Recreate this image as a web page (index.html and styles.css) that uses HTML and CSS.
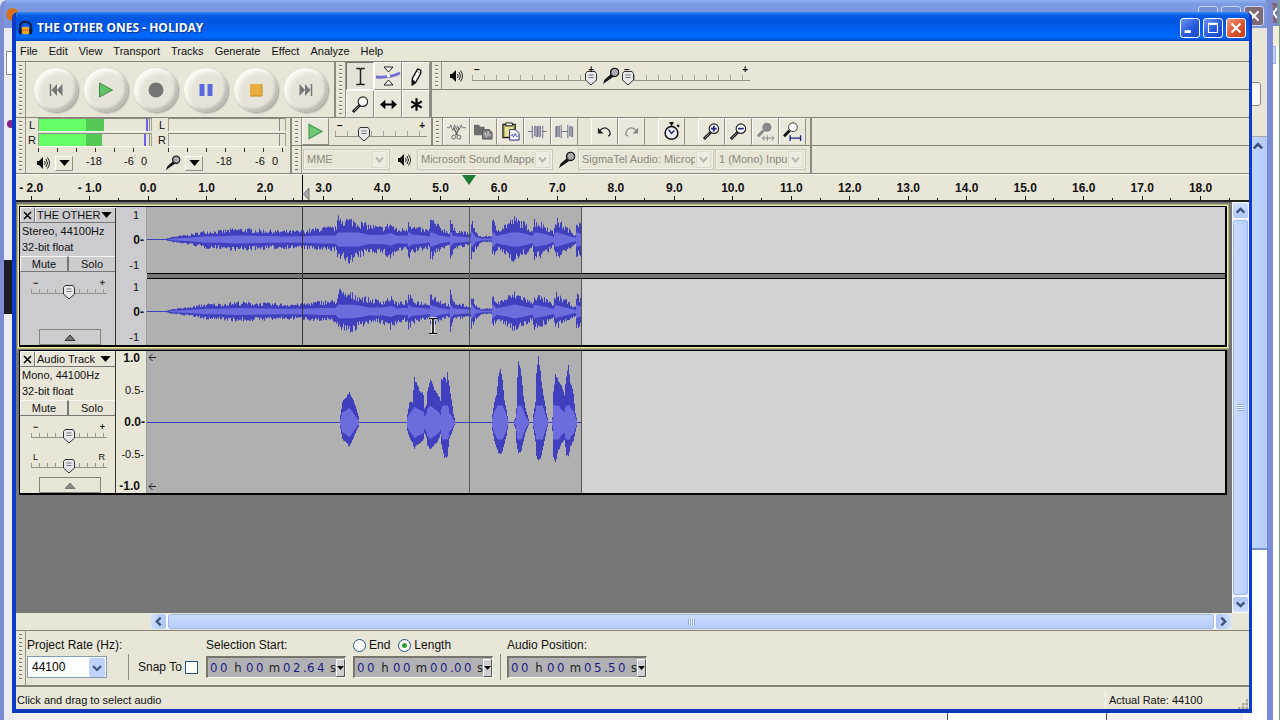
FILE: index.html
```html
<!DOCTYPE html>
<html lang="en">
<head>
<meta charset="utf-8">
<title>THE OTHER ONES - HOLIDAY</title>
<link rel="stylesheet" href="styles.css">
</head>
<body>
<svg class="defs" aria-hidden="true">
  <symbol id="speaker" viewBox="0 0 14 14"><path d="M1 5h2l4-4v12L3 9H1z" fill="#111"/><path d="M8.500 5q1.500 2 0 4M10 3q3 4 0 8M11.500 1.500q4 5.500 0 11" fill="none" stroke="#222" stroke-width="1"/></symbol>
  <symbol id="mic" viewBox="0 0 20 20"><path d="M1 19l2-5 8-7 3 3-9 6z" fill="#111"/><circle cx="14" cy="6" r="4.500" fill="#999" stroke="#111" stroke-width="1.500"/><path d="M12 3l5 5M11 5l4 4M14 2l4 4" stroke="#eee" stroke-width=".7"/></symbol>
  <symbol id="lens" viewBox="0 0 20 20"><path d="M2 18l7-7" stroke="#111" stroke-width="3"/><path d="M3 17l5-5" stroke="#bbb" stroke-width=".8"/><circle cx="12.500" cy="7" r="5" fill="#fdfdfd" stroke="#222" stroke-width="1.200"/></symbol>
  <symbol id="down" viewBox="0 0 12 7"><path d="M0 0h12L6 7z" fill="#000"/></symbol>
  <symbol id="chev" viewBox="0 0 10 10"><path d="M1.500 7L5 3.500 8.500 7" fill="none" stroke="#3d5580" stroke-width="2.200"/></symbol>
</svg>

<div class="back-far"><svg class="far-close" viewBox="0 0 8 20"><path d="M1 5l7 10M1 15L8 5" stroke="#fff" stroke-width="2"/></svg><span class="far-scroll"></span></div>
<div class="back-near">
  <span class="near-firefox"></span>
  <div class="near-buttons"><i></i><i></i><svg viewBox="0 0 20 20"><path d="M5 5l10 10M15 5L5 15" stroke="#fff" stroke-width="2.400"/></svg></div>
  <div class="near-body">
    <div class="near-left"><i class="tab"></i><i class="dot"></i><i class="dark"></i></div>
    <div class="near-right"><div class="near-tools"><i></i></div><div class="near-scroll"><svg><use href="#chev"/></svg></div></div>
  </div>
  <span class="near-box"></span>
</div>

<main class="window">
  <header class="titlebar">
    <svg class="logo" viewBox="0 0 16 16"><path d="M2 12V7q0-6 6-6t6 6v5" fill="none" stroke="#14204f" stroke-width="2.400"/><rect x="4" y="6" width="8" height="8" rx="2" fill="#f5a71b"/><path d="M4 10h8" stroke="#d83c10" stroke-width="1.500" stroke-dasharray="1 1"/><rect x="1" y="8" width="3" height="6" rx="1" fill="#151a38"/><rect x="12" y="8" width="3" height="6" rx="1" fill="#151a38"/></svg>
    <h1>THE OTHER ONES - HOLIDAY</h1>
    <button class="wb" aria-label="Minimize"><svg viewBox="0 0 20 20"><path d="M4 14h7" stroke="#fff" stroke-width="3"/></svg></button>
    <button class="wb" aria-label="Maximize"><svg viewBox="0 0 20 20"><path d="M5 6h10v9H5z" fill="none" stroke="#fff" stroke-width="1.200"/><path d="M4.500 5.500h11" stroke="#fff" stroke-width="2.400"/></svg></button>
    <button class="wb close" aria-label="Close"><svg viewBox="0 0 20 20"><path d="M5 5l10 10M15 5L5 15" stroke="#fff" stroke-width="2.200"/></svg></button>
  </header>
  <nav class="menu">
    <button>File</button><button>Edit</button><button>View</button><button>Transport</button><button>Tracks</button><button>Generate</button><button>Effect</button><button>Analyze</button><button>Help</button>
  </nav>

  <div class="dock">
    <div class="dock-row">
      <section class="bar transport"><i class="grip"></i>
        <button class="round" aria-label="Skip to start"><svg viewBox="0 0 16 16"><path d="M2.500 2v12" stroke="#777" stroke-width="1.500"/><path d="M9 2v12L3.500 8zM14.500 2v12L9 8z" fill="#777"/></svg></button>
        <button class="round" aria-label="Play"><svg viewBox="0 0 16 16"><path d="M1.500 1l13 7-13 7z" fill="#5fc267" stroke="#3b8b45"/></svg></button>
        <button class="round" aria-label="Record"><svg viewBox="0 0 16 16"><circle cx="8" cy="8" r="7.500" fill="#747474"/></svg></button>
        <button class="round" aria-label="Pause"><svg viewBox="0 0 16 16"><path d="M1.500 2h5v12h-5zM9.500 2h5v12h-5z" fill="#5a69dd"/></svg></button>
        <button class="round" aria-label="Stop"><svg viewBox="0 0 16 16"><path d="M2 2h12v12H2z" fill="#e8ad3c"/><path d="M2 14h12V2" fill="none" stroke="#c58b22"/></svg></button>
        <button class="round" aria-label="Skip to end"><svg viewBox="0 0 16 16"><path d="M13.500 2v12" stroke="#777" stroke-width="1.500"/><path d="M7 2v12l5.500-6zM1.500 2v12L7 8z" fill="#777"/></svg></button>
      </section>
      <section class="bar"><i class="grip"></i>
        <div class="tools">
          <button class="tool on" aria-label="Selection"><svg viewBox="0 0 18 18"><path d="M5 1.500h3l1 1 1-1h3M5 16.500h3l1-1 1 1h3M9 2v14" fill="none" stroke="#222" stroke-width="1.400"/></svg></button>
          <button class="tool" aria-label="Envelope"><svg class="wide" viewBox="0 0 26 22"><path d="M1 12q14 1 24-4" fill="none" stroke="#7470d0" stroke-width="3"/><path d="M9 2h9l-4.500 5zM9 20h9l-4.500-5z" fill="#fff" stroke="#222"/><circle cx="13.500" cy="11" r="1.500" fill="#fff"/></svg></button>
          <button class="tool" aria-label="Draw"><svg viewBox="0 0 18 18"><path d="M5 11l5-9 3 1 0 3-5 9-3 2z" fill="#fff" stroke="#111" stroke-width="1.300"/><path d="M5 12l3 2-3 3zM10 4l2 2" fill="#111" stroke="#111" stroke-width=".6"/></svg></button>
          <button class="tool" aria-label="Zoom"><svg viewBox="0 0 20 20"><use href="#lens"/></svg></button>
          <button class="tool" aria-label="Time shift"><svg viewBox="0 0 18 18"><path d="M3 9h12" stroke="#000" stroke-width="2"/><path d="M1 9l5-4.500v9zM17 9l-5-4.500v9z"/></svg></button>
          <button class="tool" aria-label="Multi"><svg viewBox="0 0 18 18"><path d="M9 3v12M4 6l10 6M14 6L4 12" stroke="#000" stroke-width="2"/></svg></button>
        </div>
      </section>
      <div class="stack grow">
        <section class="bar mixer"><i class="grip"></i>
          <svg class="spk"><use href="#speaker"/></svg>
          <label class="slider vol-out"><span>−</span><span>+</span><input type="range" value="100" aria-label="Output volume"></label>
          <svg class="mic"><use href="#mic"/></svg>
          <label class="slider vol-in"><span>−</span><span>+</span><input type="range" value="0" aria-label="Input volume"></label>
        </section>
      </div>
    </div>
    <div class="dock-row">
      <section class="bar meters"><i class="grip"></i>
        <div class="meter out">
          <span class="ch">L</span><div class="level"><i class="fill l"></i><i class="peak pl"></i></div>
          <span class="ch">R</span><div class="level"><i class="fill r"></i><i class="peak pr"></i></div>
          <div class="ticks"></div>
          <div class="scale"><svg class="spk"><use href="#speaker"/></svg><button class="drop" aria-label="Output meter menu"><svg><use href="#down"/></svg></button><span class="n18">-18</span><span class="n6">-6</span><span>0</span></div>
        </div>
        <div class="meter in">
          <span class="ch">L</span><div class="level"></div>
          <span class="ch">R</span><div class="level"></div>
          <div class="ticks"></div>
          <div class="scale"><svg class="mic"><use href="#mic"/></svg><button class="drop" aria-label="Input meter menu"><svg><use href="#down"/></svg></button><span class="n18">-18</span><span class="n6">-6</span><span>0</span></div>
        </div>
      </section>
      <div class="stack">
        <div class="dock-line">
          <section class="bar speed"><i class="grip"></i>
            <button class="tool" aria-label="Play at speed"><svg viewBox="0 0 16 16"><path d="M2.500 2l11 6-11 6z" fill="#6cc975" stroke="#4c9d56"/></svg></button>
            <label class="slider"><span>−</span><span>+</span><input type="range" value="29" aria-label="Playback speed"></label>
          </section>
          <section class="bar edit"><i class="grip"></i>
            <button class="tool" aria-label="Cut"><svg viewBox="0 0 20 20"><path d="M0 6h3l1-3 2 6 2-6 2 5 1-4 2 4 2-5 1 3h4" fill="none" stroke="#777" stroke-width="1"/><path d="M7 6l4 8M13 6l-4 8" stroke="#555" stroke-width="1.300"/><circle cx="7" cy="16" r="2" fill="none" stroke="#666"/><circle cx="12.500" cy="16" r="2" fill="none" stroke="#666"/></svg></button>
            <button class="tool" aria-label="Copy"><svg viewBox="0 0 20 20"><path d="M0 3h5l2 2h4v9H0z" fill="#6e6e6e"/><path d="M9 8h7l3 3v7H9z" fill="#7d7d7d" stroke="#555"/><path d="M10 14l2-3 1 5 2-6 1 5 2-2" fill="none" stroke="#ddd" stroke-width=".8"/></svg></button>
            <button class="tool" aria-label="Paste"><svg viewBox="0 0 20 20"><path d="M2 2.500h13v14H2z" fill="#a6a860" stroke="#222" stroke-width="1.300"/><path d="M4 5h9v10H4z" fill="#e7e493"/><path d="M5 1h7v3H5z" fill="#eee" stroke="#222"/><path d="M9 8h6l4 4v7H9z" fill="#fff" stroke="#23236e"/><path d="M10 15l2-2 1 3 2-4 1 3h2" fill="none" stroke="#3737b0" stroke-width=".9"/></svg></button>
            <button class="tool" aria-label="Trim"><svg viewBox="0 0 20 20"><path d="M0 10h4M16 10h4M4.500 4v13M7 15V5q1-1 1.500 0v10q1 1 1.500 0V5q1-1 1.500 0v10q1 1 1.500 0V4M15.500 4v13" fill="none" stroke="#737390" stroke-width="1.100"/></svg></button>
            <button class="tool" aria-label="Silence"><svg viewBox="0 0 20 20"><path d="M0 5v10q1 1 1.500 0V5q1-1 1.500 0v10q1 1 1.500 0V4M6.500 3v14M7 10h6M13.500 3v14M15.500 15V5q1-1 1.500 0v10q1 1 1.500 0V5" fill="none" stroke="#737390" stroke-width="1.100"/></svg></button>
            <i class="gap"></i>
            <button class="tool" aria-label="Undo"><svg viewBox="0 0 20 20"><path d="M5 9q5-5 9-1t0 7" fill="none" stroke="#222" stroke-width="1.400"/><path d="M3 6v6h6z" fill="#222"/></svg></button>
            <button class="tool" aria-label="Redo"><svg viewBox="0 0 20 20"><path d="M15 9q-5-5-9-1t0 7" fill="none" stroke="#888" stroke-width="1.400"/><path d="M17 6v6h-6z" fill="#888"/></svg></button>
            <i class="gap"></i>
            <button class="tool" aria-label="Sync-lock"><svg viewBox="0 0 20 20"><path d="M8 1h4M10 1v3M16 3l2 2" stroke="#111" stroke-width="2"/><circle cx="10" cy="11.500" r="6.700" fill="#eef" stroke="#111" stroke-width="1.600"/><path d="M7 8l3 4 3-3" fill="none" stroke="#226" stroke-width="1.500"/></svg></button>
            <i class="gap"></i>
            <button class="tool" aria-label="Zoom in"><svg viewBox="0 0 20 20"><use href="#lens"/><path d="M9.500 7h6M12.500 4v6" stroke="#22228c" stroke-width="2"/></svg></button>
            <button class="tool" aria-label="Zoom out"><svg viewBox="0 0 20 20"><use href="#lens"/><path d="M9.500 7h6" stroke="#22228c" stroke-width="2"/></svg></button>
            <button class="tool" aria-label="Fit selection"><svg viewBox="0 0 20 20"><path d="M2 15l6-6" stroke="#888" stroke-width="3"/><circle cx="11.500" cy="5.500" r="4.800" fill="#888"/><path d="M7 17h12M9 14.500L6.500 17 9 19.500M16.500 14.500L19 17l-2.500 2.500M12 14v6" fill="none" stroke="#888"/></svg></button>
            <button class="tool" aria-label="Fit project"><svg viewBox="0 0 20 20"><path d="M1 15l6-6" stroke="#111" stroke-width="3"/><circle cx="10.500" cy="5.500" r="4.600" fill="#fff" stroke="#333"/><path d="M7 17h12M7.500 14v6M18.500 14v6" stroke="#22228c" stroke-width="1.400"/></svg></button>
          </section>
        </div>
        <section class="bar device"><i class="grip"></i>
          <select class="host" disabled aria-label="Audio host"><option>MME</option></select>
          <svg class="spk"><use href="#speaker"/></svg>
          <select class="dev" disabled aria-label="Output device"><option>Microsoft Sound Mapper - Output</option></select>
          <svg class="mic"><use href="#mic"/></svg>
          <select class="dev" disabled aria-label="Input device"><option>SigmaTel Audio: Microphone</option></select>
          <select class="chan" disabled aria-label="Input channels"><option>1 (Mono) Input</option></select>
        </section>
      </div>
    </div>
  </div>

  <div class="ruler">
    <div class="marks"><span>- 2.0</span><span>- 1.0</span><span>0.0</span><span>1.0</span><span>2.0</span><span>3.0</span><span>4.0</span><span>5.0</span><span>6.0</span><span>7.0</span><span>8.0</span><span>9.0</span><span>10.0</span><span>11.0</span><span>12.0</span><span>13.0</span><span>14.0</span><span>15.0</span><span>16.0</span><span>17.0</span><span>18.0</span></div>
    <svg class="sel-mark" viewBox="0 0 8 26"><path d="M.5 0v26" stroke="#000"/><path d="M7 13v12L1.500 19z" fill="#aaa" stroke="#777"/></svg>
    <svg class="play-mark" viewBox="0 0 14 11"><path d="M0 0h14L7 10z" fill="#1c7a34"/></svg>
  </div>

  <div class="workspace">
    <div class="tracks">
      <article class="track selected">
        <div class="panel">
          <div class="head"><button class="x" aria-label="Close track"><svg viewBox="0 0 9 9"><path d="M1 1l7 7M8 1L1 8" stroke="#000" stroke-width="1.500"/></svg></button><button class="name">THE OTHER<svg><use href="#down"/></svg></button></div>
          <p>Stereo, 44100Hz</p><p>32-bit float</p>
          <div class="ms"><button>Mute</button><button>Solo</button></div>
          <label class="slider gain"><span>−</span><span>+</span><input type="range" value="50" aria-label="Gain"></label>
          <button class="fold" aria-label="Collapse"><svg viewBox="0 0 12 7"><path d="M1 6.500L6 1l5 5.500z" fill="#777" stroke="#333"/></svg></button>
        </div>
        <div class="lanes">
          <div class="lane"><div class="vr three"><span>1</span><b>0-</b><span>-1</span></div><div class="wave"><svg class="clip" data-wave="left" viewBox="0 0 434 66"></svg></div></div>
          <div class="divider"></div>
          <div class="lane"><div class="vr three"><span>1</span><b>0-</b><span>-1</span></div><div class="wave"><svg class="clip" data-wave="right" viewBox="0 0 434 66"></svg></div></div>
        </div>
        <i class="cursor-line"></i><i class="play-line"></i>
      </article>
      <article class="track">
        <div class="panel">
          <div class="head"><button class="x" aria-label="Close track"><svg viewBox="0 0 9 9"><path d="M1 1l7 7M8 1L1 8" stroke="#000" stroke-width="1.500"/></svg></button><button class="name">Audio Track<svg><use href="#down"/></svg></button></div>
          <p>Mono, 44100Hz</p><p>32-bit float</p>
          <div class="ms"><button>Mute</button><button>Solo</button></div>
          <label class="slider gain"><span>−</span><span>+</span><input type="range" value="50" aria-label="Gain"></label>
          <label class="slider gain pan"><span>L</span><span>R</span><input type="range" value="50" aria-label="Pan"></label>
          <button class="fold" aria-label="Collapse"><svg viewBox="0 0 12 7"><path d="M1 6.500L6 1l5 5.500z" fill="#888" stroke="#777"/></svg></button>
        </div>
        <div class="lanes">
          <div class="lane tall"><div class="vr five"><b>1.0</b><span>0.5-</span><b>0.0-</b><span>-0.5-</span><b>-1.0</b></div><div class="wave"><svg class="clip" data-wave="mono" viewBox="0 0 434 142"><path d="M2 6.500h7M5.500 3L2 6.500 5.500 10M2 135.500h7M5.500 132L2 135.500l3.500 3.500" fill="none" stroke="#222"/></svg></div></div>
        </div>
        <i class="play-line"></i>
      </article>
    </div>
    <div class="vscroll"><button aria-label="Scroll up"><svg><use href="#chev"/></svg></button><i class="thumb"></i><button class="flip" aria-label="Scroll down"><svg><use href="#chev"/></svg></button></div>
    <svg class="ibeam" viewBox="0 0 12 18"><path d="M2 1.500h3l1 1 1-1h3M2 16.500h3l1-1 1 1h3M6 2v14" fill="none" stroke="#fff" stroke-width="3.500"/><path d="M2 1.500h3l1 1 1-1h3M2 16.500h3l1-1 1 1h3M6 2v14" fill="none" stroke="#000" stroke-width="1.600"/></svg>
  </div>
  <div class="hscroll"><button class="left" aria-label="Scroll left"><svg><use href="#chev"/></svg></button><i class="thumb"></i><button class="right" aria-label="Scroll right"><svg><use href="#chev"/></svg></button></div>

  <section class="bar selection"><i class="grip"></i>
    <div class="field rate"><label for="rate">Project Rate (Hz):</label><select id="rate"><option>44100</option></select></div>
    <i class="rule"></i>
    <label class="snap">Snap To <input type="checkbox"></label>
    <div class="field"><span class="cap">Selection Start:</span><div class="time"><i>0</i><i>0</i><u>h</u><i>0</i><i>0</i><u class="m">m</u><i>0</i><i>2</i><s>.</s><i>6</i><i>4</i><u>s</u><button aria-label="Start format"><svg><use href="#down"/></svg></button></div></div>
    <div class="field"><div class="cap radios"><label><input type="radio" name="mode">End</label><label><input type="radio" name="mode" checked>Length</label></div><div class="time"><i>0</i><i>0</i><u>h</u><i>0</i><i>0</i><u class="m">m</u><i>0</i><i>0</i><s>.</s><i>0</i><i>0</i><u>s</u><button aria-label="Length format"><svg><use href="#down"/></svg></button></div></div>
    <i class="rule tight"></i>
    <div class="field"><span class="cap">Audio Position:</span><div class="time"><i>0</i><i>0</i><u>h</u><i>0</i><i>0</i><u class="m">m</u><i>0</i><i>5</i><s>.</s><i>5</i><i>0</i><u>s</u><button aria-label="Position format"><svg><use href="#down"/></svg></button></div></div>
  </section>
  <footer class="status"><span>Click and drag to select audio</span><span class="actual">Actual Rate: 44100</span><i class="sizer"></i></footer>
</main>
<script src="waves.js"></script>
</body>
</html>
```

FILE: styles.css
```css
* { box-sizing: border-box; }
body { margin: 0; height: 100vh; position: relative; overflow: hidden; background: #dfe3ee; font: 11px/14px "Liberation Sans", sans-serif; color: #111; }
button { appearance: none; border: 0; background: none; padding: 0; margin: 0; font: inherit; color: inherit; display: flex; align-items: center; justify-content: center; }
i, u, s { font-style: normal; text-decoration: none; display: block; }
h1, p { margin: 0; font-weight: normal; }
.defs { position: absolute; width: 0; height: 0; }

/* windows behind */
.back-far { position: absolute; inset: 0 0 0 auto; width: 16px; background: linear-gradient(#7c8ccb 0 26px, #efecdc 26px 46px, #fff 46px); border-right: 1px solid #74a37a; }
.far-close { position: absolute; top: 3px; right: 2px; width: 8px; height: 20px; background: #806b72; }
.far-scroll { position: absolute; top: 46px; right: 3px; width: 8px; height: 18px; background: #c3d5fd; border: 1px solid #9bb2e6; }
.back-near { position: absolute; inset: 0 7px -10px 0; border: 4px solid #7b8bd6; border-right-width: 6px; border-top: 0; border-radius: 8px 8px 0 0; background: linear-gradient(#8fb0f2 0, #7c9ae0 4px, #7994d8 28px, #fdfdff 28px); display: flex; flex-direction: column; padding-top: 28px; }
.near-firefox { position: absolute; left: 2px; top: 8px; width: 13px; height: 13px; border-radius: 50%; background: #d9701e; }
.near-buttons { position: absolute; top: 6px; right: 3px; display: flex; gap: 3px; }
.near-buttons i, .near-buttons svg { width: 20px; height: 20px; border: 1px solid #c7d4f4; border-radius: 3px; background: #7590d8; }
.near-buttons svg { background: #7d6a74; }
.near-body { flex: 1; display: flex; justify-content: space-between; background: #f0f0f5; }
.near-left { width: 10px; background: #ecebf0; display: flex; flex-direction: column; align-items: flex-start; }
.near-left .tab { width: 7px; height: 24px; margin: 23px 0 0 2px; border: 1px solid #8a8a8a; border-right: 0; background: #fff; }
.near-left .dot { width: 8px; height: 8px; border-radius: 50%; background: #82268f; margin: 45px 0 0 3px; }
.near-left .dark { width: 8px; height: 54px; background: #1e1c22; margin-top: 132px; }
.near-right { width: 24px; display: flex; flex-direction: column; background: #fff; }
.near-tools { height: 109px; background: #e8e6d8; border-bottom: 1px solid #aaa; padding-top: 54px; }
.near-tools i { width: 18px; height: 24px; background: #f7f7f4; border: 1px solid #888; border-radius: 3px; }
.near-scroll { height: 413px; background: linear-gradient(90deg, #c9dbff, #b4cbfb); border-bottom: 2px solid #7b95cc; }
.near-scroll svg { width: 12px; height: 12px; display: block; margin: 3px 0 0 9px; }
.near-box { position: absolute; left: 943px; bottom: 0; width: 160px; height: 17px; background: #fff; border: 1px solid #555; }

/* window frame */
.window { position: absolute; inset: 12px 28px 7px 12px; display: flex; flex-direction: column; background: #e8e6d7; border: solid #0a3cc8; border-width: 0 3px 4px 4px; border-bottom-color: #0c38b8; border-radius: 6px 6px 0 0; overflow: hidden; }
.titlebar { height: 29px; flex: none; margin: 0 -3px 0 -4px; padding: 3px 6px 0 6px; display: flex; align-items: center; gap: 3px; background: linear-gradient(#3d8ff5 0, #0a5fe8 3px, #0055e0 8px, #0060f4 18px, #006bff 25px, #0346c0 29px); }
.titlebar h1 { flex: 1; font: bold 12px/18px "Open Sans", sans-serif; color: #fff; text-shadow: 1px 1px 1px #0b2e80; }
.logo { width: 15px; height: 15px; margin-right: 1px; }
.wb { width: 20px; height: 20px; border: 1px solid #fff; border-radius: 3px; background: linear-gradient(135deg, #6b94f4, #2356dc 60%, #1b4cc6); }
.wb svg { width: 18px; height: 18px; }
.wb.close { background: linear-gradient(135deg, #f09a80, #d9512c 60%, #c23d18); }
.menu { height: 20px; flex: none; display: flex; align-items: center; gap: 11px; padding: 0 4px; }

/* toolbars */
.dock { flex: none; border-top: 1px solid #85837a; background: repeating-linear-gradient(#e8e6d7 0 27px, #85837a 27px 28px); }
.dock-row { display: flex; height: 56px; }
.dock-line { display: flex; }
.stack { display: flex; flex-direction: column; }
.grow { flex: 1; }
.bar { display: flex; align-items: center; background: #e8e6d7; border-right: 2px solid #8d8b80; border-bottom: 1px solid #85837a; }
.grip { flex: none; align-self: stretch; width: 10px; border-right: 1px solid #97958a; padding: 3px; background: repeating-linear-gradient(#77756c 0 1px, #fbfaf2 1px 2px, #e8e6d7 2px 4px) content-box; }
.transport { width: 320px; }
.round { width: 44px; height: 44px; border-radius: 50%; background: #e6e4d8; margin-right: 6px; box-shadow: inset 4px 4px 4px #fbfaf3, inset -3px -3px 3px #bdbbb3, 1px 1px 2px #99978f; }
.transport .grip { margin-right: 8px; }
.round svg { width: 16px; height: 16px; }
.tools { display: grid; grid-template-columns: repeat(3, 28px); grid-auto-rows: 28px; margin-bottom: -1px; }
.tool { width: 27px; height: 27px; background: #eae8db; border: 1px solid; border-color: #fbfaf3 #918f86 #918f86 #fbfaf3; }
.tools .tool { width: 28px; height: 28px; }
.tool.on { border-color: #77756c #fff #fff #77756c; background: #e4e2d6; }
.tool svg { width: 19px; height: 19px; }
.tool svg.wide { width: 26px; height: 22px; }
.spk { width: 14px; height: 14px; flex: none; }
.mic { width: 18px; height: 18px; flex: none; }
.mixer { height: 28px; border-right: 0; }
.mixer .spk { margin: 0 9px 0 7px; }
.mixer .grip { height: 27px; }

.slider { position: relative; display: flex; justify-content: space-between; width: 126px; height: 18px; padding: 0 2px; font: bold 10px/5px "Liberation Sans", sans-serif; }
.slider span { position: relative; z-index: 1; pointer-events: none; }
.slider input { appearance: none; position: absolute; inset: 0; width: 100%; height: 18px; margin: 0; background: linear-gradient(#95938a, #95938a) 0 13px / 100% 1px no-repeat, repeating-linear-gradient(90deg, #a5a398 0 1px, transparent 1px 12px) 0 8px / 100% 5px no-repeat; }
.slider input::-webkit-slider-thumb { appearance: none; width: 12px; height: 16px; margin-top: 4px; background: url("data:image/svg+xml,%3Csvg xmlns='http://www.w3.org/2000/svg' viewBox='0 0 12 16'%3E%3Cpath d='M2 1.500h8l1.500 2V10L6 15 .5 10V3.500z' fill='%23e6e6ec' stroke='%23333'/%3E%3Cpath d='M3.500 5h5M3.500 7.500h5' stroke='%23777'/%3E%3C/svg%3E") center / 12px 16px no-repeat; }
.vol-out { width: 125px; padding-right: 3px; }
.vol-in { width: 128px; margin-left: 2px; }
.mixer .mic { margin-left: 5px; }

.meters { width: 276px; align-items: stretch; }
.meter { display: grid; grid-template-columns: 12px 114px; grid-template-rows: 14px 14px 4px 1fr; width: 130px; row-gap: 1px; font: 11px/14px "Liberation Sans", sans-serif; }
.meter.in { grid-template-columns: 12px 118px; width: 134px; }
.ch { text-align: center; }
.level { position: relative; border: 1px solid #a5a398; border-top-color: #8c8a80; border-bottom-color: #fbfaf3; background: linear-gradient(#888, #888) 110px 0 / 1px 100% no-repeat; }
.fill { height: 100%; background: linear-gradient(90deg, #66fd66 0 47px, #55c855 47px); }
.fill.l { width: 65px; }
.fill.r { width: 63px; }
.peak { position: absolute; top: 0; bottom: 0; width: 2px; left: 107px; background: #6a62ea; }
.pr { left: 105px; }
.ticks { grid-column: 2; background: repeating-linear-gradient(90deg, #333 0 1px, transparent 1px 19px) 0 0 / 100% 100% no-repeat; }
.scale { grid-column: 1 / -1; display: flex; align-items: center; padding: 0 5px 0 9px; }
.scale .spk, .scale .mic { margin-right: 4px; width: 16px; }
.drop { width: 18px; height: 15px; border: 1px solid; border-color: #fff #8f8d84 #8f8d84 #fff; }
.drop svg { width: 11px; height: 6px; }
.scale span { line-height: 12px; margin-bottom: 4px; }
.n18 { margin-left: 13px; }
.n6 { margin-left: auto; margin-right: 7px; }
.meter.in .scale { padding-right: 8px; }

.speed { width: 141px; height: 28px; }
.speed .slider { width: 92px; margin-left: 6px; }
.edit { height: 28px; width: 379px; }
.edit .tool { border-bottom-color: #e0ded2; flex: none; }
.gap { width: 13px; flex: none; }
.device { height: 28px; gap: 1px; }
.device select { height: 21px; appearance: none; opacity: 1; margin: 0; border: 1px solid #cbc8b8; outline: 1px solid #f4f2e8; outline-offset: -2px; border-radius: 0; padding: 0 18px 0 3px; font: 11px/19px "Liberation Sans", sans-serif; color: #8c897d; background: url("data:image/svg+xml,%3Csvg xmlns='http://www.w3.org/2000/svg' viewBox='0 0 15 17'%3E%3Cpath d='M.5.500h14v16H.5z' fill='%23efede1' stroke='%23dedbcb'/%3E%3Cpath d='M4 6.500l3.500 4 3.500-4' fill='none' stroke='%23b9b6a6' stroke-width='2'/%3E%3C/svg%3E") right 2px center / 15px 17px no-repeat #e8e6d7; }
.host { width: 87px; }
.dev { width: 136px; }
.chan { width: 91px; }
.device .spk { margin: 0 5px 0 6px; }
.device .mic { margin: 0 1px 0 4px; }

/* time ruler */
.ruler { position: relative; height: 28px; flex: none; border-bottom: 2px solid #222; border-top: 1px solid #fbfaf3; padding-right: 19px; overflow: hidden; }
.marks { display: flex; height: 100%; margin-left: -14px; font: bold 12px/27px "Liberation Sans", sans-serif; text-align: center; }
.marks span { flex: 1; background: linear-gradient(#111, #111) 50% 100% / 1px 4px no-repeat, linear-gradient(#111, #111) 100% 100% / 1px 2px no-repeat; }
.sel-mark { position: absolute; left: 286px; top: 0; width: 8px; height: 26px; }
.play-mark { position: absolute; left: 446px; top: 0; width: 14px; height: 11px; }

/* tracks */
.workspace { position: relative; flex: 1; min-height: 0; display: flex; background: #777; }
.tracks { flex: 1; padding: 4px 5px 0 3px; display: flex; flex-direction: column; gap: 3px; }
.track { position: relative; display: flex; border: solid #000; border-width: 1px 2px 2px 1px; background: #e8e6d7; }
.track.selected { background: #cccccf; box-shadow: 0 0 0 1px #ecee9c, 0 0 0 2px #b4b47c; }
.panel { width: 96px; flex: none; display: flex; flex-direction: column; border-right: 1px solid #333; font: 11px/16px "Liberation Sans", sans-serif; }
.head, .ms { display: flex; height: 16px; border-bottom: 1px solid #777; }
.head button, .ms button { border-left: 1px solid #f7f7f7; border-top: 1px solid #f7f7f7; }
.head .x { width: 15px; flex: none; border-right: 1px solid #777; }
.x svg { width: 9px; height: 9px; }
.head .name { flex: 1; justify-content: space-between; padding: 0 4px 0 1px; white-space: nowrap; }
.name svg { width: 11px; height: 6px; flex: none; }
.panel p { padding-left: 2px; }
.ms { margin-top: 1px; }
.ms button { flex: 1; }
.ms button + button { border-left: 2px solid #777; }
.gain { width: 76px; margin: 9px 0 0 11px; font-size: 9px; }
.gain input { background: linear-gradient(#95938a, #95938a) 0 12px / 100% 1px no-repeat, repeating-linear-gradient(90deg, #999 0 1px, transparent 1px 8px) 0 8px / 100% 4px no-repeat; }
.pan { margin-top: 12px; font-weight: normal; }
.fold { width: 62px; height: 16px; margin: auto auto 0 19px; border: 1px solid; border-color: #fbfaf3 #85837a #85837a #fbfaf3; outline: 1px solid #85837a; outline-offset: -1px; }
.fold svg { width: 12px; height: 7px; }
.lanes { flex: 1; display: flex; flex-direction: column; }
.lane { display: flex; height: 66px; }
.lane.tall { height: 142px; }
.divider { height: 6px; margin-left: 31px; background: #777; border: solid #000; border-width: 1px 0; }
.vr { width: 31px; display: flex; flex-direction: column; justify-content: space-between; align-items: flex-end; border-right: 1px solid #999; padding: 1px 7px 1px 0; font: 11px/14px "Liberation Sans", sans-serif; }
.vr b { font-size: 12px; margin-right: -5px; }
.five { padding: 0 6px 0 0; }
.five span { margin-right: -4px; }
.five b:first-child, .five b:last-child { margin-right: 0; }
.wave { flex: 1; background: #d2d2d2; }
.clip { display: block; box-sizing: content-box; width: 434px; height: 100%; background: #b0b0b0; border-right: 1px solid #555; }
.cursor-line, .play-line { position: absolute; top: 0; bottom: 0; width: 1px; left: 282px; background: #333; }
.play-line { left: 449px; background: #555; }
.ibeam { position: absolute; left: 411px; top: 115px; width: 12px; height: 18px; }

/* scroll bars */
.vscroll { width: 17px; display: flex; flex-direction: column; gap: 2px; background: #f6f8fd; padding: 1px; }
.vscroll button, .hscroll button { flex: none; width: 15px; height: 15px; border-radius: 2px; background: linear-gradient(#cfe0ff, #afc6f6); }
.vscroll svg, .hscroll svg { width: 11px; height: 11px; }
.flip { transform: rotate(180deg); }
.thumb { flex: 1; border-radius: 2px; border: 1px solid #9db8ee; background: repeating-linear-gradient(#90aae0 0 1px, #eef4ff 1px 2px) center / 7px 7px no-repeat, linear-gradient(90deg, #cadcff, #b6ccfa); }
.hscroll { flex: none; height: 17px; display: flex; gap: 2px; padding: 1px 18px 1px 135px; background: linear-gradient(#fff, #fff) content-box, #e8e6d7; }
.hscroll .thumb { background: repeating-linear-gradient(90deg, #90aae0 0 1px, #eef4ff 1px 2px) center / 7px 6px no-repeat, linear-gradient(#cadcff, #b6ccfa); }
.left { transform: rotate(-90deg); }
.right { transform: rotate(90deg); }

/* selection bar */
.selection { flex: none; height: 57px; border: solid #85837a; border-width: 1px 0 2px; font: 12px/16px "Liberation Sans", sans-serif; }
.field { display: flex; flex-direction: column; gap: 2px; width: 147px; margin-top: -2px; }
.cap, .rate label { height: 18px; line-height: 18px; white-space: nowrap; }
.rate { width: 101px; padding-left: 1px; }
.rate select { appearance: none; width: 80px; height: 22px; border: 1px solid #7f9db9; border-radius: 0; padding: 0 0 0 4px; margin: 0; font: inherit; color: #000; background: url("data:image/svg+xml,%3Csvg xmlns='http://www.w3.org/2000/svg' viewBox='0 0 16 19'%3E%3Crect width='16' height='19' rx='2' fill='%23bfd2fb'/%3E%3Cpath d='M4 8l4 4 4-4' fill='none' stroke='%233d5580' stroke-width='2.200'/%3E%3C/svg%3E") right 1px center / 16px 19px no-repeat #fff; }
.rule { width: 1px; height: 26px; margin: 18px 9px 0 1px; background: #8d8b80; }
.tight { margin-right: 6px; margin-left: 0; }
.snap { display: flex; align-items: center; gap: 3px; width: 68px; margin-top: 18px; white-space: nowrap; }
.snap input { appearance: none; width: 13px; height: 13px; margin: 0; border: 1px solid #1c5180; background: #fff; }
.time { display: flex; align-items: center; width: 140px; height: 22px; padding-left: 2px; background: #b2b2b4; border: solid; border-width: 2px 1px 1px 2px; border-color: #77756c #fbfaf3 #fbfaf3 #77756c; font: 13px/18px "DejaVu Sans Condensed", "Noto Sans", sans-serif; color: #1c1c84; }
.time i { width: 10px; }
.time u { width: 16px; color: #222; text-align: center; }
.time .m { width: 17px; }
.time s { width: 4px; }
.time u:last-of-type { width: 14px; flex: 1; text-align: right; }
.time button { width: 9px; height: 18px; background: #d0d0d0; border: 1px solid; border-color: #fff #555 #555 #fff; }
.time button svg { width: 7px; height: 4px; }
.radios { display: flex; gap: 8px; }
.radios label { display: flex; align-items: center; gap: 3px; }
.radios input { appearance: none; width: 13px; height: 13px; margin: 0; border: 1px solid #1c5180; border-radius: 50%; background: #fff; }
.radios input:checked { background: radial-gradient(#2f9e2f 0 2px, #fff 3px); }
.status { flex: none; height: 22px; display: flex; align-items: center; justify-content: space-between; padding-top: 3px; padding-left: 1px; }
.actual { margin-left: auto; width: 132px; border-left: 1px solid #fff; padding-left: 3px; }
.sizer { width: 11px; height: 11px; align-self: flex-end; margin-right: 1px; background: radial-gradient(#a5a396 0 1px, transparent 2px) 0 0 / 4px 4px; clip-path: polygon(100% 0, 100% 100%, 0 100%); }
```

FILE: waves.js
```js
// Draws clip waveforms from [x, peak above, peak below] envelope points.
const SVG = "http://www.w3.org/2000/svg";
let seed = 7;
const rnd = () => (seed = (seed * 16807) % 2147483647) / 2147483647;

const stereo = [[0,0,0],[18,0,0],[25,2,2],[43,4,4],[58,7,7],[72,7,7],[90,9,9],[110,8,8],[135,7,7],[155,7,7],[175,10,9],[188,10,9],
  [190,15,14],[192,22,19],[195,18,17],[205,17,19],[212,15,15],[222,12,10],[235,10,11],[243,14,16],[250,8,10],[260,10,9],[261,18,17],
  [265,11,11],[278,8,8],[282,9,7],[283,18,17],[292,11,9],[302,6,5],[303,19,18],[306,9,8],[321,5,5],[323,5,5],[324,19,18],[328,6,8],
  [334,2,2],[344,3,2],[345,19,18],[349,8,9],[358,13,12],[367,18,18],[375,15,14],[385,8,8],[387,17,17],[398,12,12],[406,6,6],
  [408,18,17],[418,11,10],[428,4,4],[429,18,17],[433,13,13]];

const words = [
  [[192,0,0],[195,20,16],[199,25,20],[202,29,24],[205,24,17],[208,16,10],[211,6,4],[212,0,0]],
  [[260,8,8],[262,19,14],[265,20,20],[267,44,25],[270,36,22],[273,30,20],[276,28,17],[277,14,10],[279,17,15],[280,30,22],[283,42,27],[287,32,22],
   [291,26,17],[293,22,12],[294,42,22],[297,45,34],[299,41,36],[300,51,34],[302,35,15],[304,23,11],[306,8,5],[308,0,0]],
  [[345,8,8],[347,20,18],[349,27,24],[351,45,30],[353,54,31],[355,42,28],[357,22,20],[359,12,13],[361,0,0]],
  [[366,0,0],[368,4,6],[369,14,20],[370,44,26],[371,60,31],[374,48,27],[376,25,19],[378,14,10],[382,0,0]],
  [[386,8,6],[388,20,18],[389,50,32],[391,66,38],[393,50,36],[395,33,28],[397,22,18],[399,9,8],[401,0,0]],
  [[405,5,8],[406,30,34],[408,48,39],[411,42,28],[414,36,20],[417,26,17],[419,47,32],[421,55,34],[423,40,24],[426,29,18],[428,9,9],[430,0,0]]
];

function at(points, x, k) {
  for (let n = 1; n < points.length; n++) {
    const a = points[n - 1], b = points[n];
    if (x <= b[0]) return a[k] + (b[k] - a[k]) * (x - a[0]) / (b[0] - a[0]);
  }
  return 0;
}

function shape(svg, points, mid, noise, rms, cap) {
  let peaks = "", body = "";
  const x0 = points[0][0], x1 = points[points.length - 1][0];
  for (let x = x0; x <= x1; x++) {
    const j = 1 - noise / 2 + rnd() * noise, k = 1 - noise / 2 + rnd() * noise;
    const up = at(points, x, 1), dn = at(points, x, 2);
    peaks += `M${x + .5} ${mid - up * j - .5}V${mid + dn * k + .5}`;
    const r = Math.min(cap, rms * Math.min(up, dn));
    if (r > .5) body += `M${x + .5} ${mid - r}V${mid + r}`;
  }
  for (const [d, color] of [[peaks, "#4040be"], [body, "#6c6cdc"]]) {
    const p = document.createElementNS(SVG, "path");
    p.setAttribute("d", d);
    p.setAttribute("stroke", color);
    svg.append(p);
  }
}

document.querySelectorAll("[data-wave]").forEach(svg => {
  if (svg.dataset.wave === "mono") {
    shape(svg, [[0,0,0],[433,0,0]], 71.5, 0, 0, 0);
    words.forEach(w => shape(svg, w, 71.5, .08, .62, 17));
  } else {
    const gain = svg.dataset.wave === "left" ? 1 : .87;
    shape(svg, stereo.map(([x, u, d]) => [x, u * gain, d * gain]), 32.5, .6, .45, 7);
  }
});
```
